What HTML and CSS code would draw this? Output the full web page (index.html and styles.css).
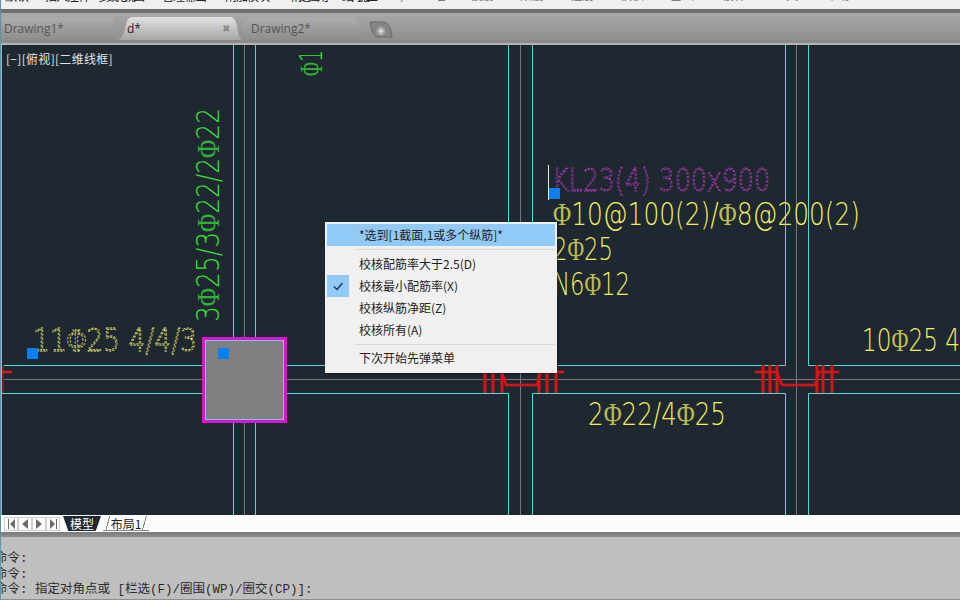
FILE: index.html
```html
<!DOCTYPE html>
<html lang="zh">
<head>
<meta charset="utf-8">
<title>CAD</title>
<link rel="stylesheet" href="styles.css">
</head>
<body>
<div class="app">
  <div class="menubar">
    <span class="m1">默认</span><span class="m2">插入注释</span><span class="m3">参数化视图</span><span class="m4">管理输出</span><span class="m5">附加模块</span><span class="m6">精选应用</span><span class="m7">结构施工</span><span class="m8 faint">,</span><span class="m9 faint">墙</span><span class="m10 faint">板筋</span><span class="m11 faint">梁筋</span><span class="m12 faint">柱筋</span><span class="m13 faint">校核</span><span class="m14 faint">基础</span><span class="m15 faint">楼梯</span><span class="m16 faint">工具</span><span class="m17 faint">帮助</span>
  </div>
  <div class="darkbar"></div>
  <div class="tabbar">
    <div class="tab tab-first">Drawing1*</div>
    <div class="tab tab-active"><span>d*</span><span class="close">✖</span></div>
    <div class="tab tab-last">Drawing2*</div>
    <svg class="newtab" width="24" height="18" viewBox="0 0 24 18"><path d="M1 1H15C20 2 22 8 23 16H8C4 14 2 7 1 1Z" fill="#868686" stroke="#666"/><circle cx="12" cy="10" r="4.500" fill="#a3a3a3"/><path d="M12 7.500V12.500M9.500 10H14.500" stroke="#dedede" stroke-width="1.600"/></svg>
  </div>
  <div class="canvas">
    <svg class="drawing" width="958" height="470" viewBox="2 45 958 470">
      <g class="gray">
        <path d="M244.500 45V515M520.500 45V515M796.500 45V515M2 379.500H960"/>
      </g>
      <g class="cyan">
        <path d="M233.500 45V515M255.500 45V515"/>
        <path d="M2 365.500H233M255 365.500H508.500V45M532.500 45V365.500H785.500V45M808.500 45V365.500H960"/>
        <path d="M2 393.500H233M255 393.500H508.500V515M532.500 515V393.500H785.500V515M808.500 515V393.500H960"/>
      </g>
      <g class="red">
        <path class="edge" d="M3 365V393"/>
        <path class="thin" d="M2 372H12"/>
        <path d="M485 365V393M493 365V393M502 365V393M539 365V393M547 365V393M556 365V393"/>
        <path class="thin" d="M502 372L506 385H537L541 372H564"/>
        <path d="M763 365V393M770 365V393M777 365V393M817 365V393M823 365V393M832 365V393"/>
        <path class="thin" d="M755 372H777L782 385H815L819 372H839"/>
      </g>
      <rect class="column" x="203.500" y="338.500" width="82" height="83"/>
      <rect class="column-in" x="205.500" y="340.500" width="78" height="79"/>
      <path class="white" d="M548.500 165V200"/>
      <text class="cad dash-y" x="33" y="351" textLength="164" lengthAdjust="spacingAndGlyphs">11<tspan class="phi">Φ</tspan>25 4/4/3</text>
      <text class="cad dash-p" x="552" y="191" textLength="218" lengthAdjust="spacingAndGlyphs">KL23(4) 300x900</text>
      <text class="cad yellow" x="553" y="225" textLength="307" lengthAdjust="spacingAndGlyphs"><tspan class="phi">Φ</tspan>10@100(2)/<tspan class="phi">Φ</tspan>8@200(2)</text>
      <text class="cad yellow" x="553" y="260" textLength="60" lengthAdjust="spacingAndGlyphs">2<tspan class="phi">Φ</tspan>25</text>
      <text class="cad yellow" x="553" y="295" textLength="77" lengthAdjust="spacingAndGlyphs">N6<tspan class="phi">Φ</tspan>12</text>
      <text class="cad yellow" x="862" y="351" textLength="98" lengthAdjust="spacingAndGlyphs">10<tspan class="phi">Φ</tspan>25 4</text>
      <text class="cad yellow" x="588" y="425" textLength="138" lengthAdjust="spacingAndGlyphs">2<tspan class="phi">Φ</tspan>22/4<tspan class="phi">Φ</tspan>25</text>
      <text class="cad green" transform="translate(219 322) rotate(-90)" textLength="214" lengthAdjust="spacingAndGlyphs">3<tspan class="phi">Φ</tspan>25/3<tspan class="phi">Φ</tspan>22/2<tspan class="phi">Φ</tspan>22</text>
      <text class="cad green" transform="translate(322 76) rotate(-90)" textLength="26" lengthAdjust="spacingAndGlyphs"><tspan class="phi">Φ</tspan>1</text>
      <g class="grip">
        <rect x="27" y="348" width="11" height="11"/>
        <rect x="218" y="348" width="11" height="11"/>
        <rect x="549" y="188" width="11" height="11"/>
      </g>
    </svg>
    <div class="viewlabel">[−][俯视][二维线框]</div>
    <div class="ctxmenu">
      <div class="item hot">*选到[1截面,1或多个纵筋]*</div>
      <div class="sep"></div>
      <div class="item">校核配筋率大于2.5(D)</div>
      <div class="item"><svg class="check" width="22" height="22" viewBox="0 0 22 22"><path d="M7 11.500L10 14.500L15.500 8" fill="none" stroke="#1d3a5c" stroke-width="1.500"/></svg>校核最小配筋率(X)</div>
      <div class="item">校核纵筋净距(Z)</div>
      <div class="item">校核所有(A)</div>
      <div class="sep sep2"></div>
      <div class="item">下次开始先弹菜单</div>
    </div>
  </div>
  <div class="layoutbar">
    <svg class="nav" width="56" height="14" viewBox="0 0 56 14">
      <g fill="none" stroke="#cfcfcf"><rect x=".5" y=".5" width="13" height="13"/><rect x="14.500" y=".5" width="13" height="13"/><rect x="28.500" y=".5" width="13" height="13"/><rect x="42.500" y=".5" width="13" height="13"/></g>
      <g fill="#6b6b6b"><path d="M4 2H5V12H4ZM11 2V12L6 7ZM24 2V12L18 7ZM32 2V12L38 7ZM46 2V12L51 7ZM52 2H53V12H52Z"/></g>
    </svg>
    <div class="ltab ltab-active">模型</div>
    <div class="ltab ltab-other">布局1</div>
  </div>
  <div class="splitter"></div>
  <div class="command">
    <div class="line">命令:</div>
    <div class="line">命令:</div>
    <div class="line">命令: 指定对角点或 [栏选(F)/圈围(WP)/圈交(CP)]:</div>
  </div>
</div>
</body>
</html>
```
FILE: styles.css
```css
* { box-sizing: border-box; }
html, body { margin: 0; padding: 0; width: 960px; height: 600px; overflow: hidden; background: #c0c0c0; }
.app { width: 960px; height: 600px; display: flex; flex-direction: column; overflow: hidden; border-left: 1px solid #5f93a8; }

.menubar { height: 9px; flex: none; background: #f0f0f0; overflow: hidden; display: flex; align-items: flex-end; font: 12px/12px "Noto Sans CJK SC", sans-serif; color: #222; padding-left: 4px; white-space: nowrap; }
.menubar span { flex: none; margin-bottom: 7px; }
.menubar .faint { margin-bottom: 8px; color: #666; }
.m1 { width: 40px; } .m2 { width: 52px; letter-spacing: -1px; } .m3 { width: 65px; letter-spacing: -3px; } .m4 { width: 63px; letter-spacing: -1px; } .m5 { width: 65px; letter-spacing: -1px; } .m6 { width: 52px; letter-spacing: -3px; } .m7 { width: 58px; letter-spacing: -4px; } .m8 { width: 34px; } .m9 { width: 36px; } .m10 { width: 50px; } .m11 { width: 50px; } .m12 { width: 50px; } .m13 { width: 50px; } .m14 { width: 52px; } .m15 { width: 52px; } .m16 { width: 52px; } .m17 { width: 40px; }

.darkbar { height: 4px; flex: none; background: #6f6f6f; }
.tabbar { height: 32px; flex: none; display: flex; align-items: flex-end; padding: 0 0 5px 1px; background: linear-gradient(#a9a9a9, #8f8f8f 84%, #8a8a8a 84%, #8a8a8a 94%, #b4b4b4 94%); }
.tab { height: 23px; display: flex; align-items: center; padding-bottom: 1px; font: 12px "Open Sans", sans-serif; color: #555; background: linear-gradient(#aeaeae, #8d8d8d); flex: none; }
.tab-first { width: 116px; padding-left: 2px; clip-path: path("M0 0H106C112 0 112 4 110 10C108 16 107 21 116 23H0Z"); }
.tab-active { width: 124px; justify-content: space-between; padding: 0 12px 1px 9px; color: #222; background: linear-gradient(#e2e2e2, #a6a6a6); clip-path: path("M0 23C6 20 6 14 8 8C9 2 11 0 16 0H112C116 0 118 4 119 9C120 15 120 20 124 23Z"); }
.close { color: #8a8a8a; font-size: 10px; }
.tab-last { width: 125px; padding-left: 9px; clip-path: path("M0 10C2 4 4 0 9 0H109C115 0 116 4 117 10C118 16 120 21 125 23H9C3 20 0 14 0 10Z"); }
.newtab { flex: none; margin: 0 0 1px 2px; }

.canvas { height: 470px; flex: none; background: #1f2730; display: flex; overflow: hidden; position: relative; border-left: 1px solid #8fb8cc; }
.drawing { flex: none; display: block; }
.gray path { fill: none; stroke: #77757b; stroke-width: 1; }
.cyan path { fill: none; stroke: #4fdade; stroke-width: 1; }
.red path { fill: none; stroke: #d61616; stroke-width: 3; }
.red .thin { stroke-width: 2.500; }
.red .edge { stroke: #7a2020; stroke-width: 2; }
.column { fill: none; stroke: #d416d4; stroke-width: 3; }
.column-in { fill: #808080; stroke: #76c7ea; stroke-width: 1; }
.white { stroke: #e6e6e6; stroke-width: 1; }
.grip rect { fill: #0a7ff0; }
.cad { font-family: "DejaVu Sans", sans-serif; font-weight: 200; font-size: 32px; }
.phi { font-family: "Liberation Serif", serif; font-weight: 400; fill-opacity: .75; }
.yellow { fill: #f0f060; }
.green { fill: #3be03b; }
.dash-y { fill: none; stroke: #f4f47a; stroke-width: .8; stroke-dasharray: 2.500 1.500; }
.dash-p { fill: none; stroke: #c43ec8; stroke-width: .8; stroke-dasharray: 2.500 1.500; }

.viewlabel { position: absolute; left: 4px; top: 6px; font: 12px/16px "Noto Sans CJK SC", sans-serif; letter-spacing: .3px; color: #e2e2e2; }

.ctxmenu { position: absolute; left: 323px; top: 177px; width: 232px; height: 151px; background: #f0f0f0; padding: 2px; display: flex; flex-direction: column; box-shadow: 1px 1px 2px rgba(0,0,0,.4); font: 12px/22px "Noto Sans CJK SC", sans-serif; color: #222; }
.item { height: 22px; flex: none; padding-left: 32px; display: flex; align-items: center; white-space: nowrap; }
.item.hot { background: #91c9f7; }
.check { background: #91c9f7; flex: none; margin-left: -32px; margin-right: 10px; }
.sep { height: 1px; background: #d7d7d7; margin: 3px 0 3px 28px; flex: none; }
.sep2 { margin: 3px 0 2px 28px; }

.layoutbar { height: 17px; flex: none; background: #fbfbfb; display: flex; align-items: center; padding-left: 3px; }
.nav { flex: none; }
.ltab { height: 15px; font: 12px/15px "Noto Sans CJK SC", sans-serif; display: flex; align-items: center; justify-content: center; flex: none; }
.ltab-active { width: 38px; margin-left: 3px; color: #fff; background: #1f2730; clip-path: polygon(0 0, 100% 0, 86% 100%, 14% 100%); }
.ltab-other { width: 46px; margin-left: 2px; color: #222; background: linear-gradient(105deg, transparent 6px, #888 6px, #888 7px, transparent 7px), linear-gradient(105deg, transparent calc(100% - 7px), #888 calc(100% - 7px), #888 calc(100% - 6px), transparent calc(100% - 6px)), linear-gradient(transparent 14px, #888 14px); }
.splitter { height: 5px; flex: none; background: linear-gradient(#7a7a7a, #8f8f8f); }
.command { flex: 1; background: #bfbfbf; border-bottom: 2px solid #8e8e8e; padding: 15px 0 0; margin-left: -6px; font: 12.500px/15.500px "Liberation Mono", "Noto Sans CJK SC", monospace; color: #2b2b2b; }
.line { white-space: pre; }
```
